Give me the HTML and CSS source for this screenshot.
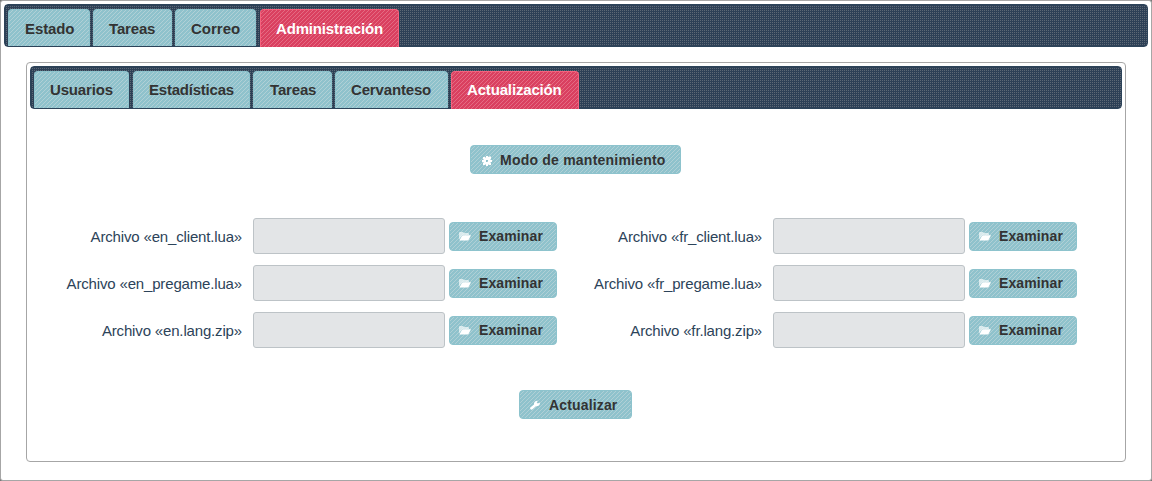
FILE: index.html
```
<!DOCTYPE html>
<html lang="es">
<head>
<meta charset="utf-8">
<title>Administración</title>
<link rel="stylesheet" href="styles.css">
</head>
<body>
<svg class="defs" aria-hidden="true">
<symbol id="gear" viewBox="0 0 10 10"><path fill-rule="evenodd" d="M4 0h2v1h1V.5h2V3h-.5v1H10v2H8.500v1H9v2H7v-.5H6V10H4V8.500H3V9H1V7h.5V6H0V4h1.500V3H1V1h2v.5h1zM4 4v2h2V4z"/></symbol>
<symbol id="folder" viewBox="0 0 12 9"><path opacity=".65" d="M0 7.500V1Q0 0 1 0h3l1 1h4q1 0 1 1v1H3.500z"/><path d="M.4 8.500 3 3.700Q3.300 3.200 4 3.200h8L9.800 7.600Q9.300 8.500 8.500 8.500z"/></symbol>
<symbol id="wrench" viewBox="0 0 10 10"><path d="M.3 7.500 4 4.600C3.700 2.300 5.200.5 8 .8L6.600 2.200 7.800 3.400 9.900 2.400C10.200 5 8.300 6.500 5.900 6.200L2.500 9.300Q1.300 10 .5 9.200-.2 8.300.3 7.500z"/></symbol>
</svg>
<main class="tabs outer">
  <nav class="bar">
    <a class="tab estado">Estado</a><a class="tab tareas">Tareas</a><a class="tab correo">Correo</a><a class="tab admin active">Administración</a>
  </nav>
  <section class="tabs inner">
    <nav class="bar">
      <a class="tab usuarios">Usuarios</a><a class="tab estadisticas">Estadísticas</a><a class="tab tareas">Tareas</a><a class="tab cervanteso">Cervanteso</a><a class="tab actualizacion active">Actualización</a>
    </nav>
    <div class="action top"><button class="btn gear"><svg class="icon"><use href="#gear"/></svg>Modo de mantenimiento</button></div>
    <form class="files">
      <div class="row"><label>Archivo «en_client.lua»</label><input readonly><button type="button" class="btn"><svg class="icon"><use href="#folder"/></svg>Examinar</button></div>
      <div class="row"><label>Archivo «fr_client.lua»</label><input readonly><button type="button" class="btn"><svg class="icon"><use href="#folder"/></svg>Examinar</button></div>
      <div class="row"><label>Archivo «en_pregame.lua»</label><input readonly><button type="button" class="btn"><svg class="icon"><use href="#folder"/></svg>Examinar</button></div>
      <div class="row"><label>Archivo «fr_pregame.lua»</label><input readonly><button type="button" class="btn"><svg class="icon"><use href="#folder"/></svg>Examinar</button></div>
      <div class="row"><label>Archivo «en.lang.zip»</label><input readonly><button type="button" class="btn"><svg class="icon"><use href="#folder"/></svg>Examinar</button></div>
      <div class="row"><label>Archivo «fr.lang.zip»</label><input readonly><button type="button" class="btn"><svg class="icon"><use href="#folder"/></svg>Examinar</button></div>
    </form>
    <div class="action bottom"><button class="btn wrench"><svg class="icon"><use href="#wrench"/></svg>Actualizar</button></div>
  </section>
</main>
</body>
</html>
```
FILE: styles.css
```
* { box-sizing: border-box; }
body {
  margin: 0;
  background: #777;
  color: #2c4359;
  font: 15px "Liberation Sans", Arial, sans-serif;
}
.defs { display: none; }
.tabs { border: 1px solid #a6a6a6; border-radius: 4px; background: #fff; padding: 3px; }
.outer { height: 481px; border-radius: 3px; }
.inner { height: 400px; margin: 15px 22px 0; }
.bar {
  display: flex;
  gap: 3px;
  height: 43px;
  padding: 4px 3px 0;
  border: 1px solid #2c4359;
  border-radius: 4px;
  background:
    linear-gradient(90deg, #2d4056 50%, transparent 50%) 0 0 / 2px 2px,
    linear-gradient(#2d4056 50%, #5c6875 50%) 0 0 / 2px 2px;
}
.tab {
  flex: none;
  height: 37px;
  padding-left: 15px;
  border: 1px solid #8dc3cd;
  border-bottom: 0;
  border-radius: 4px 4px 0 0;
  background: linear-gradient(135deg, transparent 40%, #b0d0d6 40%, #b0d0d6 60%, transparent 60%) 0 0 / 4px 4px #8fc2cc;
  color: #333;
  font-weight: bold;
  letter-spacing: -0.16px;
  line-height: 38px;
}
.inner .tab { line-height: 36px; }
.estado { width: 82px; padding-left: 16px; letter-spacing: -0.1px; }
.tareas { width: 79px; }
.inner .tareas { padding-left: 16px; }
.correo { width: 81px; margin-right: 1px; letter-spacing: 0; }
.admin { width: 139px; }
.usuarios { width: 95px; margin-right: 1px; }
.estadisticas { width: 117px; letter-spacing: -0.22px; }
.cervanteso { width: 113px; }
.actualizacion { width: 128px; }
.tab.active {
  height: 38px;
  border-color: #f7627e;
  background: linear-gradient(135deg, transparent 40%, #e46b83 40%, #e46b83 60%, transparent 60%) 0 0 / 4px 4px #da4060;
  color: #fff;
}
.action { display: flex; justify-content: center; padding-right: 1px; }
.top { margin-top: 36px; }
.bottom { margin-top: 42px; }
.btn {
  display: flex;
  align-items: center;
  width: 108px;
  height: 29px;
  padding: 0 0 0 9px;
  border: 1px solid #8dc3cd;
  border-radius: 4px;
  background: linear-gradient(135deg, transparent 40%, #b0d0d6 40%, #b0d0d6 60%, transparent 60%) 0 0 / 4px 4px #8fc2cc;
  color: #333;
  font: bold 14px "Liberation Sans", Arial, sans-serif;
  letter-spacing: 0.12px;
  white-space: nowrap;
}
.icon { width: 12px; height: 9px; margin: 1px 8px 0 0; fill: #fff; flex: none; }
.btn.gear { width: 211px; padding-left: 11px; letter-spacing: 0.22px; }
.gear .icon { width: 10px; height: 10px; margin-top: 2px; }
.btn.wrench { width: 113px; padding-left: 10px; letter-spacing: 0.15px; }
.wrench .icon { width: 10px; height: 10px; margin: 0 9px 0 0; }
.files { display: grid; grid-template-columns: 520px 520px; row-gap: 11px; margin: 44px 0 0 7px; }
.row { display: flex; align-items: center; height: 36px; }
label { width: 205px; margin-right: 11px; text-align: right; letter-spacing: -0.16px; }
input { width: 192px; height: 36px; margin: 0 4px 0 0; border: 1px solid #bdc3c7; border-radius: 3px; background: #e3e5e7; }
```
